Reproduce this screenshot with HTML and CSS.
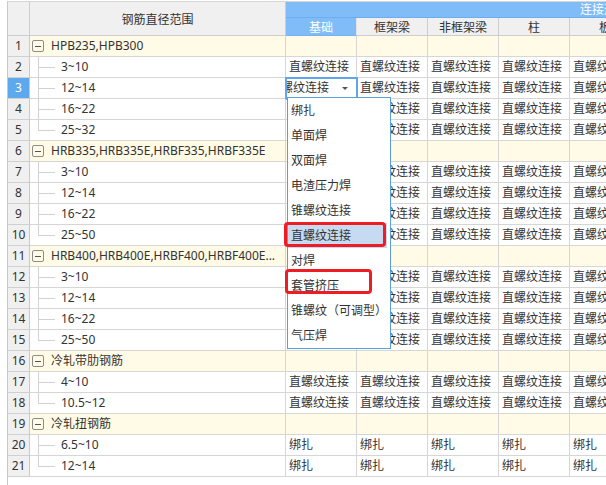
FILE: index.html
```html
<!DOCTYPE html>
<html lang="zh-CN">
<head>
<meta charset="utf-8">
<title>钢筋连接设置</title>
<link rel="stylesheet" href="styles.css">
</head>
<body>
<div class="page">
  <div class="grid">
    <div class="head">
      <div class="hc rn-h"></div>
      <div class="hc name-h">钢筋直径范围</div>
      <div class="band"><span>连接形式</span></div>
      <div class="hc sub active">基础</div>
      <div class="hc sub">框架梁</div>
      <div class="hc sub">非框架梁</div>
      <div class="hc sub">柱</div>
      <div class="hc sub">板</div>
    </div>

    <div class="row group"><div class="rn">1</div><div class="name"><i class="toggle"></i>HPB235,HPB300</div><div class="c"></div><div class="c"></div><div class="c"></div><div class="c"></div><div class="c"></div></div>
    <div class="row"><div class="rn">2</div><div class="name"><i class="branch"></i>3~10</div><div class="c">直螺纹连接</div><div class="c">直螺纹连接</div><div class="c">直螺纹连接</div><div class="c">直螺纹连接</div><div class="c">直螺纹连接</div></div>
    <div class="row"><div class="rn sel">3</div><div class="name"><i class="branch"></i>12~14</div><div class="c edit"><span class="etext">直螺纹连接</span><i class="caret"></i></div><div class="c">直螺纹连接</div><div class="c">直螺纹连接</div><div class="c">直螺纹连接</div><div class="c">直螺纹连接</div></div>
    <div class="row"><div class="rn">4</div><div class="name"><i class="branch"></i>16~22</div><div class="c">直螺纹连接</div><div class="c">直螺纹连接</div><div class="c">直螺纹连接</div><div class="c">直螺纹连接</div><div class="c">直螺纹连接</div></div>
    <div class="row"><div class="rn">5</div><div class="name"><i class="branch last"></i>25~32</div><div class="c">直螺纹连接</div><div class="c">直螺纹连接</div><div class="c">直螺纹连接</div><div class="c">直螺纹连接</div><div class="c">直螺纹连接</div></div>

    <div class="row group"><div class="rn">6</div><div class="name"><i class="toggle"></i>HRB335,HRB335E,HRBF335,HRBF335E</div><div class="c"></div><div class="c"></div><div class="c"></div><div class="c"></div><div class="c"></div></div>
    <div class="row"><div class="rn">7</div><div class="name"><i class="branch"></i>3~10</div><div class="c">直螺纹连接</div><div class="c">直螺纹连接</div><div class="c">直螺纹连接</div><div class="c">直螺纹连接</div><div class="c">直螺纹连接</div></div>
    <div class="row"><div class="rn">8</div><div class="name"><i class="branch"></i>12~14</div><div class="c">直螺纹连接</div><div class="c">直螺纹连接</div><div class="c">直螺纹连接</div><div class="c">直螺纹连接</div><div class="c">直螺纹连接</div></div>
    <div class="row"><div class="rn">9</div><div class="name"><i class="branch"></i>16~22</div><div class="c">直螺纹连接</div><div class="c">直螺纹连接</div><div class="c">直螺纹连接</div><div class="c">直螺纹连接</div><div class="c">直螺纹连接</div></div>
    <div class="row"><div class="rn">10</div><div class="name"><i class="branch last"></i>25~50</div><div class="c">直螺纹连接</div><div class="c">直螺纹连接</div><div class="c">直螺纹连接</div><div class="c">直螺纹连接</div><div class="c">直螺纹连接</div></div>

    <div class="row group"><div class="rn">11</div><div class="name"><i class="toggle"></i>HRB400,HRB400E,HRBF400,HRBF400E...</div><div class="c"></div><div class="c"></div><div class="c"></div><div class="c"></div><div class="c"></div></div>
    <div class="row"><div class="rn">12</div><div class="name"><i class="branch"></i>3~10</div><div class="c">直螺纹连接</div><div class="c">直螺纹连接</div><div class="c">直螺纹连接</div><div class="c">直螺纹连接</div><div class="c">直螺纹连接</div></div>
    <div class="row"><div class="rn">13</div><div class="name"><i class="branch"></i>12~14</div><div class="c">直螺纹连接</div><div class="c">直螺纹连接</div><div class="c">直螺纹连接</div><div class="c">直螺纹连接</div><div class="c">直螺纹连接</div></div>
    <div class="row"><div class="rn">14</div><div class="name"><i class="branch"></i>16~22</div><div class="c">直螺纹连接</div><div class="c">直螺纹连接</div><div class="c">直螺纹连接</div><div class="c">直螺纹连接</div><div class="c">直螺纹连接</div></div>
    <div class="row"><div class="rn">15</div><div class="name"><i class="branch last"></i>25~50</div><div class="c">直螺纹连接</div><div class="c">直螺纹连接</div><div class="c">直螺纹连接</div><div class="c">直螺纹连接</div><div class="c">直螺纹连接</div></div>

    <div class="row group"><div class="rn">16</div><div class="name"><i class="toggle"></i>冷轧带肋钢筋</div><div class="c"></div><div class="c"></div><div class="c"></div><div class="c"></div><div class="c"></div></div>
    <div class="row"><div class="rn">17</div><div class="name"><i class="branch"></i>4~10</div><div class="c">直螺纹连接</div><div class="c">直螺纹连接</div><div class="c">直螺纹连接</div><div class="c">直螺纹连接</div><div class="c">直螺纹连接</div></div>
    <div class="row"><div class="rn">18</div><div class="name"><i class="branch last"></i>10.5~12</div><div class="c">直螺纹连接</div><div class="c">直螺纹连接</div><div class="c">直螺纹连接</div><div class="c">直螺纹连接</div><div class="c">直螺纹连接</div></div>

    <div class="row group"><div class="rn">19</div><div class="name"><i class="toggle"></i>冷轧扭钢筋</div><div class="c"></div><div class="c"></div><div class="c"></div><div class="c"></div><div class="c"></div></div>
    <div class="row"><div class="rn">20</div><div class="name"><i class="branch"></i>6.5~10</div><div class="c">绑扎</div><div class="c">绑扎</div><div class="c">绑扎</div><div class="c">绑扎</div><div class="c">绑扎</div></div>
    <div class="row"><div class="rn">21</div><div class="name"><i class="branch last"></i>12~14</div><div class="c">绑扎</div><div class="c">绑扎</div><div class="c">绑扎</div><div class="c">绑扎</div><div class="c">绑扎</div></div>
  </div>

  <ul class="dropdown">
    <li>绑扎</li>
    <li>单面焊</li>
    <li>双面焊</li>
    <li>电渣压力焊</li>
    <li>锥螺纹连接</li>
    <li class="hl">直螺纹连接</li>
    <li>对焊</li>
    <li>套管挤压</li>
    <li>锥螺纹（可调型）</li>
    <li>气压焊</li>
  </ul>
  <div class="mark mark-a"></div>
  <div class="mark mark-b"></div>
</div>
</body>
</html>
```

FILE: styles.css
```css
html, body {
  margin: 0;
  padding: 0;
  background: #ffffff;
  overflow: hidden;
}

body {
  font-family: "Noto Sans", "Noto Sans CJK SC", sans-serif;
  font-size: 12px;
  color: #333333;
}

.page {
  position: relative;
  width: 606px;
  height: 485px;
  overflow: hidden;
}

.grid {
  margin: 1px 0 0 7px;
  width: 634px;
  height: 484px;
  border-left: 1px solid #c9c9c9;
  border-top: 1px solid #d6d6d6;
  box-sizing: border-box;
}

.head {
  display: grid;
  grid-template-columns: 22px 256px repeat(5, 71px);
  grid-template-rows: 16px 18px;
}

.hc {
  box-sizing: border-box;
  background: #f0f0f0;
  border-right: 1px solid #cdcdcd;
  border-bottom: 1px solid #cdcdcd;
  display: flex;
  align-items: center;
  justify-content: center;
  color: #333333;
  white-space: nowrap;
}

.rn-h { grid-row: 1 / 3; grid-column: 1; }
.name-h { grid-row: 1 / 3; grid-column: 2; }

.band {
  grid-row: 1;
  grid-column: 3 / -1;
  box-sizing: border-box;
  background: #80bcf7;
  border-bottom: 1px solid #6eaeec;
  color: #ffffff;
  line-height: 15px;
  padding-left: 294px;
  white-space: nowrap;
  overflow: hidden;
}

.sub.active {
  background: #80bcf7;
  color: #ffffff;
  border-bottom-color: #72b2ef;
  border-right-color: #e3e3e3;
}

.row {
  display: grid;
  grid-template-columns: 22px 256px repeat(5, 71px);
  height: 21px;
}

.row > div {
  box-sizing: border-box;
  border-right: 1px solid #d6d6d6;
  border-bottom: 1px solid #d6d6d6;
  line-height: 20px;
  white-space: nowrap;
  overflow: hidden;
}

.row > .rn {
  background: #f0f0f0;
  text-align: center;
  border-right-color: #c9c9c9;
  border-bottom-color: #d0d0d0;
}

.row > .rn.sel {
  background: #5ea8ee;
  color: #ffffff;
}

.row.group > div:not(.rn) {
  background: #fffbe6;
}

.name {
  display: flex;
  align-items: center;
  padding-left: 2px;
}

.toggle {
  display: block;
  flex: none;
  width: 12px;
  height: 12px;
  box-sizing: border-box;
  border: 1px solid #8c8c8c;
  border-radius: 2px;
  margin-right: 7px;
  background: linear-gradient(#555555, #555555) center / 6px 1px no-repeat;
}

.branch {
  display: block;
  flex: none;
  align-self: stretch;
  width: 17px;
  margin-left: 6px;
  margin-right: 6px;
  background:
    linear-gradient(#d2d2d2, #d2d2d2) 0 0 / 1px 100% no-repeat,
    linear-gradient(#d2d2d2, #d2d2d2) 0 10px / 17px 1px no-repeat;
}

.branch.last {
  background:
    linear-gradient(#d2d2d2, #d2d2d2) 0 0 / 1px 11px no-repeat,
    linear-gradient(#d2d2d2, #d2d2d2) 0 10px / 17px 1px no-repeat;
}

.c {
  padding-left: 3px;
}

.row > .c.edit {
  display: flex;
  align-items: center;
  padding-left: 0;
  outline: 2px solid #5fa6ea;
  outline-offset: -1px;
}

.etext {
  margin-left: -17px;
  flex: none;
}

.caret {
  display: block;
  flex: none;
  width: 0;
  height: 0;
  margin-left: 13px;
  margin-top: 1px;
  border-left: 3px solid transparent;
  border-right: 3px solid transparent;
  border-top: 3px solid #555555;
}

.dropdown {
  position: absolute;
  left: 287px;
  top: 97px;
  width: 104px;
  margin: 0;
  padding: 0;
  list-style: none;
  box-sizing: border-box;
  background: #ffffff;
  border: 1px solid #5b9fd8;
  text-spacing-trim: space-all;
}

.dropdown li {
  height: 25px;
  line-height: 25px;
  padding-left: 3px;
  margin-right: 3px;
  white-space: nowrap;
  color: #333333;
}

.dropdown li.hl {
  background: #c6dbf1;
}

.mark {
  position: absolute;
  box-sizing: border-box;
  border: 3px solid #ee1d24;
  border-radius: 4px;
}

.mark-a {
  left: 284px;
  top: 222px;
  width: 102px;
  height: 25px;
}

.mark-b {
  left: 285px;
  top: 269px;
  width: 87px;
  height: 25px;
}
```
